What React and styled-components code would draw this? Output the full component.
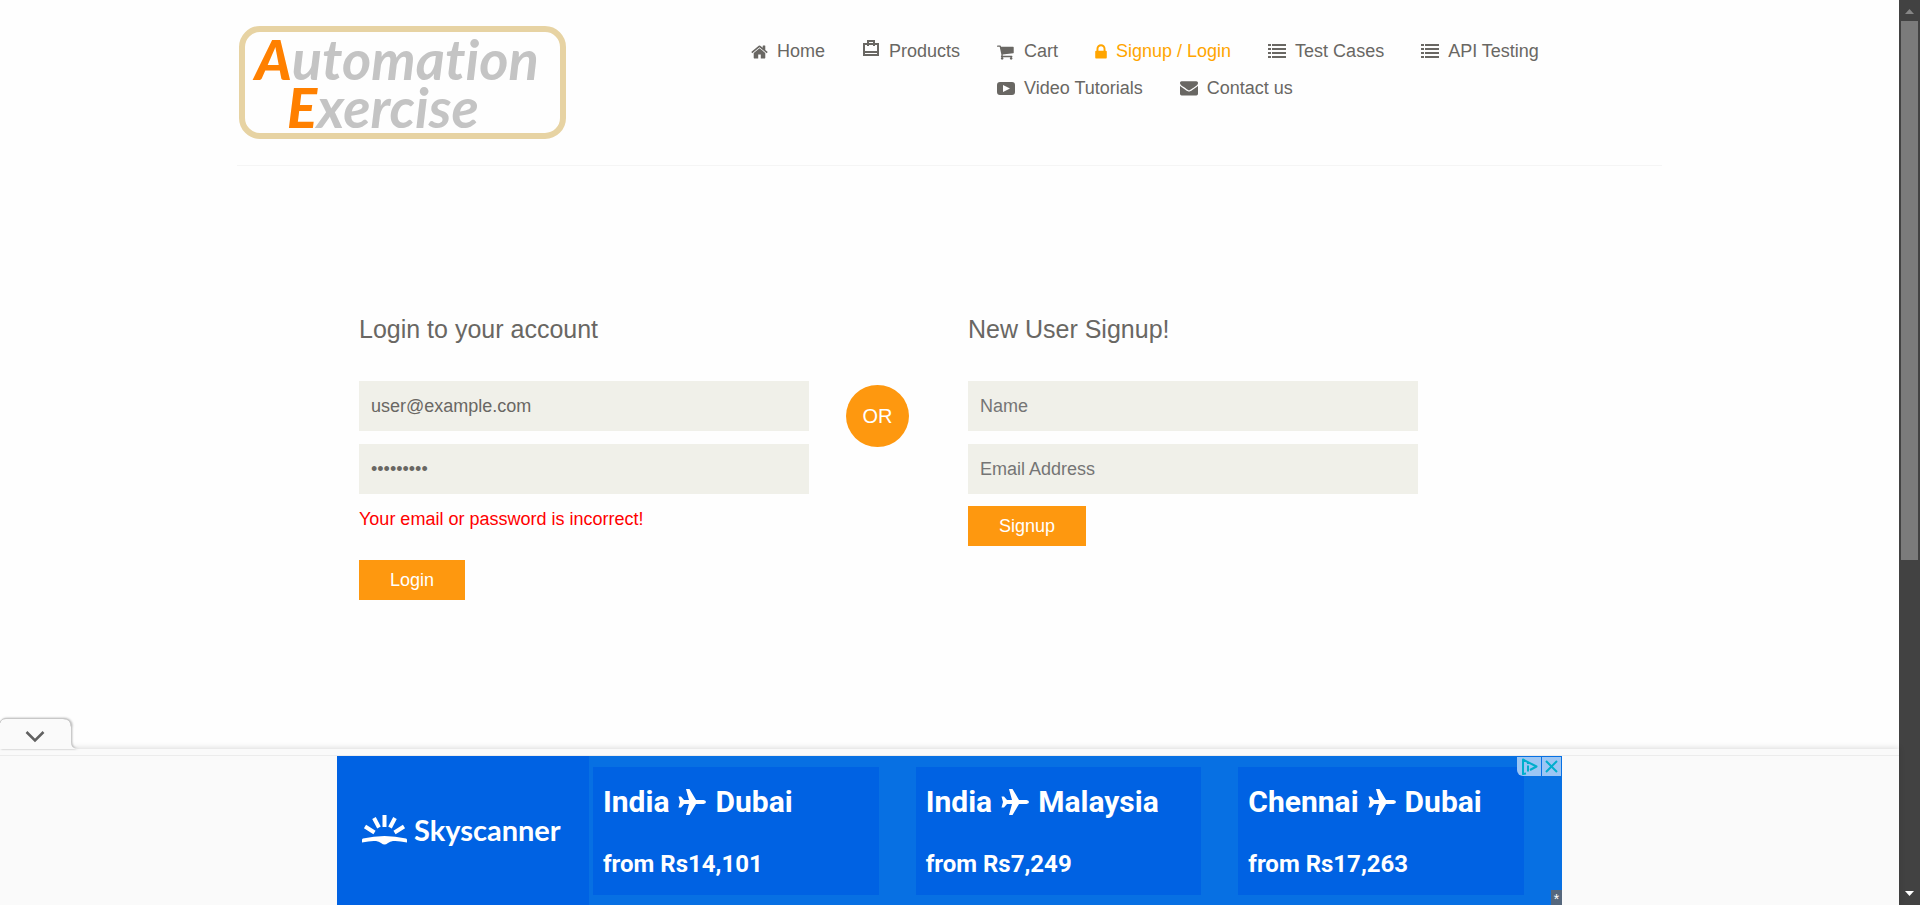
import React from 'react';
import styled, { createGlobalStyle } from 'styled-components';

const GlobalStyle = createGlobalStyle`
  *, *::before, *::after { box-sizing: border-box; }
  html, body, #root { height: 100%; }
  body {
    margin: 0;
    overflow: hidden;
    background: #fefefe;
    color: #696763;
    font: 18px/25px "Liberation Sans", Arial, sans-serif;
  }
  ul { list-style: none; margin: 0; padding: 0; }
  a { color: inherit; text-decoration: none; }
`;

const Shell = styled.div`
  display: flex;
  height: 100vh;
`;

const Viewport = styled.div`
  position: relative;
  flex: 1;
  min-width: 0;
`;

const Container = styled.div`
  max-width: 1425px;
  margin: 0 auto;
`;

const Header = styled.header`
  display: flex;
  justify-content: space-between;
  align-items: flex-start;
  height: 166px;
  padding: 26px 0 0 2px;
  border-bottom: 1px solid #f5f5f5;
`;

const Logo = styled.a`
  display: block;
  width: 327px;
  height: 113px;
  padding: 3px 0 0 10px;
  border: 6px solid #e7d3a3;
  border-radius: 21px;
  color: #c4c4c4;
  font: italic 700 56px/48px Lato, sans-serif;
  font-variant-ligatures: none;
  white-space: nowrap;
`;

const LogoLine = styled.span`
  display: block;
  padding-left: ${(p) => (p.$indent ? '32px' : '0')};
`;

const LogoInitial = styled.span`
  color: #ff8000;
  font-weight: 900;
`;

const NavList = styled.ul`
  display: flex;
  align-items: flex-start;
  column-gap: 37px;
  padding-top: 13px;
`;

const NavWrap = styled.li`
  width: 665px;
`;

const NavGroup = styled.ul`
  display: flex;
  flex-wrap: wrap;
  gap: 12px 37px;
`;

const NavLink = styled.a`
  display: flex;
  align-items: center;
  gap: 9px;
  color: ${(p) => (p.$active ? 'orange' : 'inherit')};
  white-space: nowrap;
  svg { display: block; fill: currentColor; }
`;

const FormGrid = styled.main`
  display: grid;
  grid-template-columns: 1fr 85px 1fr;
  gap: 37px;
  padding: 149px 244px 0 122px;
`;

const Form = styled.form`
  display: flex;
  flex-direction: column;
  align-items: flex-start;
`;

const Title = styled.h2`
  margin: 0 0 37px;
  font-size: 25px;
  font-weight: 400;
  line-height: 29px;
`;

const Field = styled.input`
  width: 100%;
  height: 50px;
  margin: 0 0 13px;
  padding: 0 12px;
  border: 0;
  border-radius: 0;
  outline: 0;
  background: #f0f0e9;
  color: #696763;
  font: inherit;
  &::placeholder { color: #757575; opacity: 1; }
`;

const ErrorText = styled.p`
  margin: 0 0 29px;
  color: #f00;
`;

const Button = styled.button`
  height: 40px;
  margin-top: -1px;
  padding: 0 31px;
  border: 0;
  background: #fe980f;
  color: #fff;
  font: inherit;
`;

const OrBadge = styled.div`
  width: 63px;
  height: 62px;
  margin-top: 70px;
  border-radius: 50%;
  background: #fe980f;
  color: #fff;
  font-size: 20px;
  line-height: 62px;
  text-align: center;
`;

const Dock = styled.aside`
  position: absolute;
  left: 0;
  right: 0;
  bottom: 0;
  background: #fafafa;
  box-shadow: 0 -1px 6px rgba(0, 0, 0, 0.14);
`;

const DockTab = styled.button`
  position: absolute;
  left: 0;
  bottom: 100%;
  width: 78px;
  height: 31px;
  padding: 0;
  border: 0;
  background: none;
  svg { display: block; filter: drop-shadow(1px 0 1px rgba(0, 0, 0, 0.3)); }
`;

const DockEdge = styled.div`
  height: 7px;
  border-bottom: 1px solid #ececec;
`;

const Ad = styled.div`
  position: relative;
  display: flex;
  width: 1225px;
  max-width: 100%;
  height: 149px;
  margin: 0 auto;
  background: #0770e3;
  color: #fff;
  font-family: Roboto, sans-serif;
  font-weight: 700;
`;

const Brand = styled.a`
  display: flex;
  flex: none;
  align-items: center;
  gap: 7px;
  width: 252px;
  padding: 0 0 2px 25px;
  background: #0062e3;
  font: 700 29px/36px Lato, sans-serif;
`;

const Fares = styled.div`
  display: grid;
  flex: 1;
  grid-template-columns: repeat(3, 1fr);
  gap: 37px;
  padding: 11px 38px 10px 4px;
`;

const Fare = styled.a`
  display: flex;
  flex-direction: column;
  gap: 28px;
  padding: 17px 10px 0;
  background: #0062e3;
  white-space: nowrap;
`;

const Route = styled.span`
  display: flex;
  align-items: center;
  gap: 9px;
  font-size: 30px;
  line-height: 36px;
`;

const Price = styled.span`
  font-size: 24px;
  line-height: 32px;
`;

const AdControls = styled.div`
  position: absolute;
  top: 1px;
  right: 1px;
  display: flex;
  gap: 1px;
`;

const AdControl = styled.button`
  width: ${(p) => p.$width};
  height: 19px;
  padding: 0;
  border: 0;
  border-bottom-left-radius: ${(p) => (p.$rounded ? '6px' : '0')};
  background: #9cc6f4;
  svg { display: block; margin: 0 auto; }
`;

const AdMark = styled.span`
  position: absolute;
  right: 0;
  bottom: 0;
  width: 11px;
  height: 15px;
  background: #55677d;
  font: 400 14px/18px "Liberation Sans", sans-serif;
  text-align: center;
`;

const ScrollTrack = styled.div`
  display: flex;
  flex: none;
  flex-direction: column;
  justify-content: space-between;
  width: 21px;
  background: #424242;
  svg { display: block; }
`;

const ScrollTop = styled.div`
  height: 560px;
  display: flex;
  flex-direction: column;
`;

const ScrollThumb = styled.div`
  flex: 1;
  margin: 0 2px;
  background: #7b7b7b;
`;

const HomeIcon = () => (
  <svg width="17" height="18" viewBox="50 0 1692 1792" aria-hidden="true">
    <path d="M1472 992v480q0 26-19 45t-45 19h-384v-384h-256v384h-384q-26 0-45-19t-19-45v-480q0-1 .5-3t.5-3l575-474 575 474q1 2 1 6zm223-69l-62 74q-8 9-21 11h-3q-13 0-21-7l-692-577-692 577q-12 8-24 7-13-2-21-11l-62-74q-8-10-7-23.5t11-21.5l719-599q32-26 76-26t76 26l244 204v-195q0-14 9-23t23-9h192q14 0 23 9t9 23v408l219 182q10 8 11 21.5t-7 23.5z" />
  </svg>
);

const TravelIcon = () => (
  <svg width="18" height="23" viewBox="0 0 18 23" aria-hidden="true" shapeRendering="crispEdges">
    <path fillRule="evenodd" d="M5 0h8v3h4v13H1V3h4zM7 2v1h4V2zM3 5v6h12V5h-2v1h-2V5H7v1H5V5zM3 13v1h12v-1z" />
  </svg>
);

const CartIcon = () => (
  <svg width="18" height="18" viewBox="64 0 1792 1792" aria-hidden="true">
    <path d="M704 1536q0 52-38 90t-90 38-90-38-38-90 38-90 90-38 90 38 38 90zm896 0q0 52-38 90t-90 38-90-38-38-90 38-90 90-38 90 38 38 90zm128-1088v512q0 24-16.5 42.5t-40.5 21.5l-1044 122q13 60 13 70 0 16-24 64h920q26 0 45 19t19 45-19 45-45 19h-1024q-26 0-45-19t-19-45q0-11 8-31.5t16-36 21.5-40 15.5-29.5l-177-823h-204q-26 0-45-19t-19-45 19-45 45-19h256q16 0 28.5 6.5t19.5 15.5 13 24.5 8 26 5.5 29.5 4.5 26h1201q26 0 45 19t19 45z" />
  </svg>
);

const LockIcon = () => (
  <svg width="12" height="18" viewBox="298 0 1195 1792" aria-hidden="true">
    <path d="M640 768h512v-192q0-106-75-181t-181-75-181 75-75 181v192zm832 96v576q0 40-28 68t-68 28h-960q-40 0-68-28t-28-68v-576q0-40 28-68t68-28h32v-192q0-184 132-316t316-132 316 132 132 316v192h32q40 0 68 28t28 68z" />
  </svg>
);

const ListIcon = () => (
  <svg width="18" height="18" viewBox="0 0 18 18" aria-hidden="true" shapeRendering="crispEdges">
    <path d="M0 1h3v2H0zM4 1h14v2H4zM0 5h3v2H0zM4 5h14v2H4zM0 9h3v2H0zM4 9h14v2H4zM0 13h3v2H0zM4 13h14v2H4z" />
  </svg>
);

const VideoIcon = () => (
  <svg width="18" height="18" viewBox="0 0 18 18" aria-hidden="true">
    <path fillRule="evenodd" d="M3 2h12q3 0 3 3v7q0 3-3 3H3q-3 0-3-3V5q0-3 3-3zM6 5v7l7-3.500z" />
  </svg>
);

const MailIcon = () => (
  <svg width="18" height="18" viewBox="0 128 1792 1792" aria-hidden="true">
    <path d="M1792 710v794q0 66-47 113t-113 47h-1472q-66 0-113-47t-47-113v-794q44 49 101 87 362 246 497 345 57 42 92.500 65.500t94.500 48 110 24.500h2q51 0 110-24.500t94.500-48 92.500-65.500q170-123 498-345 57-39 100-87zm0-294q0 79-49 151t-122 123q-376 261-468 325-10 7-42.500 31t-54 38.500-52 32.500-57.500 27-50 9h-2q-23 0-50-9t-57.500-27-52-32.500-54-38.500-42.500-31q-91-64-262-182.500t-205-142.500q-62-42-117-115.500t-55-136.500q0-78 41.500-130t118.500-52h1472q65 0 112.500 47t47.500 113z" />
  </svg>
);

const PlaneIcon = () => (
  <svg width="28" height="26" viewBox="0 0 28 26" aria-hidden="true">
    <path fill="#fff" d="M8 0h3.500l6.500 11h7.500q2.500.5 2.500 2t-2.500 2H18l-6.500 11H8l3-11H6l-3 3.500H.5L2 13 .5 7.500H3L6 11h5z" />
  </svg>
);

const SunIcon = () => (
  <svg width="45" height="30" viewBox="0 0 45 30" fill="none" stroke="#fff" strokeWidth="4" aria-hidden="true">
    <path d="M22.500 0v12M12 3l5 9.500M33 3l-5 9.500M3 11.500l9.500 6M42 11.500l-9.500 6" />
    <path stroke="none" fill="#fff" d="M1 23.500q21.500-5 43 0 1 .3 1 1.500v2.500q-8.500-2-14-1.500-3 .5-5 2t-3.500 1.500-3.500-1.500-5-2q-5.500-.5-14 1.500V25q0-1.200 1-1.500z" />
  </svg>
);

function NavItem({ icon, active, children }) {
  return (
    <li>
      <NavLink href="#" $active={active}>
        {icon}
        {children}
      </NavLink>
    </li>
  );
}

const fares = [
  { from: 'India', to: 'Dubai', price: 'from Rs14,101' },
  { from: 'India', to: 'Malaysia', price: 'from Rs7,249' },
  { from: 'Chennai', to: 'Dubai', price: 'from Rs17,263' },
];

export default function App() {
  return (
    <Shell>
      <GlobalStyle />
      <Viewport>
        <Container>
          <Header>
            <Logo href="#">
              <LogoLine><LogoInitial>A</LogoInitial>utomation</LogoLine>
              <LogoLine $indent><LogoInitial>E</LogoInitial>xercise</LogoLine>
            </Logo>
            <nav>
              <NavList>
                <NavItem icon={<HomeIcon />}>Home</NavItem>
                <NavItem icon={<TravelIcon />}>Products</NavItem>
                <NavWrap>
                  <NavGroup>
                    <NavItem icon={<CartIcon />}>Cart</NavItem>
                    <NavItem icon={<LockIcon />} active>Signup / Login</NavItem>
                    <NavItem icon={<ListIcon />}>Test Cases</NavItem>
                    <NavItem icon={<ListIcon />}>API Testing</NavItem>
                    <NavItem icon={<VideoIcon />}>Video Tutorials</NavItem>
                    <NavItem icon={<MailIcon />}>Contact us</NavItem>
                  </NavGroup>
                </NavWrap>
              </NavList>
            </nav>
          </Header>

          <FormGrid>
            <Form onSubmit={(e) => e.preventDefault()}>
              <Title>Login to your account</Title>
              <Field type="email" aria-label="Email Address" defaultValue="user@example.com" />
              <Field type="password" aria-label="Password" defaultValue="secret123" />
              <ErrorText>Your email or password is incorrect!</ErrorText>
              <Button type="submit">Login</Button>
            </Form>
            <OrBadge>OR</OrBadge>
            <Form onSubmit={(e) => e.preventDefault()}>
              <Title>New User Signup!</Title>
              <Field type="text" aria-label="Name" placeholder="Name" />
              <Field type="email" aria-label="Email Address" placeholder="Email Address" />
              <Button type="submit">Signup</Button>
            </Form>
          </FormGrid>
        </Container>

        <Dock>
          <DockTab type="button" aria-label="Collapse">
            <svg width="78" height="31" viewBox="0 0 78 31" aria-hidden="true">
              <path fill="#fafafa" d="M0 5Q1 1 6 1h57q8 0 8 8v15q0 7 7 7H0z" />
              <path fill="none" stroke="#c8c8c8" d="M0 5Q1 .5 6 .5h57q8 0 8 8" />
              <path fill="none" stroke="#616161" strokeWidth="2.500" d="M26.500 14l8.500 8.500 8.500-8.500" />
            </svg>
          </DockTab>
          <DockEdge />
          <Ad>
            <Brand href="#"><SunIcon />Skyscanner</Brand>
            <Fares>
              {fares.map((f) => (
                <Fare href="#" key={f.price}>
                  <Route>{f.from}<PlaneIcon />{f.to}</Route>
                  <Price>{f.price}</Price>
                </Fare>
              ))}
            </Fares>
            <AdControls>
              <AdControl type="button" $width="24px" $rounded aria-label="Ad information">
                <svg width="18" height="19" viewBox="0 0 18 19" fill="none" stroke="#00aecd" strokeWidth="2" aria-hidden="true">
                  <path strokeLinejoin="round" d="M6 16.500l-3 .5V2.500l13.500 7L10 13" />
                  <path d="M8 8.500v6M8 5v2" />
                </svg>
              </AdControl>
              <AdControl type="button" $width="19px" aria-label="Close ad">
                <svg width="19" height="19" viewBox="0 0 19 19" fill="none" stroke="#00aecd" strokeWidth="2" aria-hidden="true">
                  <path d="M4 4l11 11M15 4L4 15" />
                </svg>
              </AdControl>
            </AdControls>
            <AdMark>*</AdMark>
          </Ad>
        </Dock>
      </Viewport>

      <ScrollTrack aria-hidden="true">
        <ScrollTop>
          <svg width="21" height="21" viewBox="0 0 21 21"><path fill="#868686" d="M6 14l4.500-5 4.500 5z" /></svg>
          <ScrollThumb />
        </ScrollTop>
        <svg width="21" height="21" viewBox="0 0 21 21"><path fill="#fff" d="M6 7l4.500 5L15 7z" /></svg>
      </ScrollTrack>
    </Shell>
  );
}
